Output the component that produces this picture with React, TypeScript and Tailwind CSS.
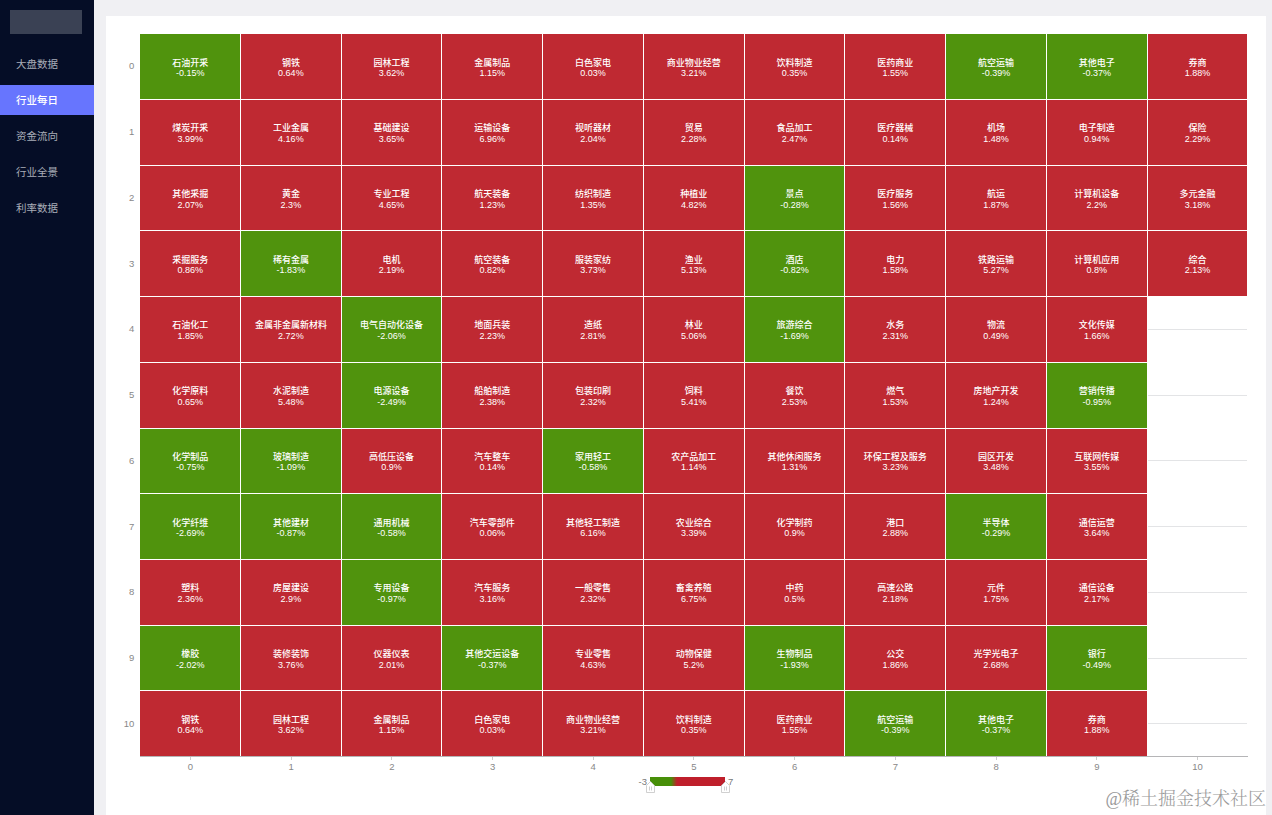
import clsx from 'clsx';

const MENU = ['大盘数据', '行业每日', '资金流向', '行业全景', '利率数据'];
const ACTIVE_MENU = '行业每日';

// one entry per chart row, [name, value] pairs from left to right
const ROWS: [string, number][][] = [
  [['石油开采', -0.15], ['钢铁', 0.64], ['园林工程', 3.62], ['金属制品', 1.15], ['白色家电', 0.03], ['商业物业经营', 3.21], ['饮料制造', 0.35], ['医药商业', 1.55], ['航空运输', -0.39], ['其他电子', -0.37], ['券商', 1.88]],
  [['煤炭开采', 3.99], ['工业金属', 4.16], ['基础建设', 3.65], ['运输设备', 6.96], ['视听器材', 2.04], ['贸易', 2.28], ['食品加工', 2.47], ['医疗器械', 0.14], ['机场', 1.48], ['电子制造', 0.94], ['保险', 2.29]],
  [['其他采掘', 2.07], ['黄金', 2.3], ['专业工程', 4.65], ['航天装备', 1.23], ['纺织制造', 1.35], ['种植业', 4.82], ['景点', -0.28], ['医疗服务', 1.56], ['航运', 1.87], ['计算机设备', 2.2], ['多元金融', 3.18]],
  [['采掘服务', 0.86], ['稀有金属', -1.83], ['电机', 2.19], ['航空装备', 0.82], ['服装家纺', 3.73], ['渔业', 5.13], ['酒店', -0.82], ['电力', 1.58], ['铁路运输', 5.27], ['计算机应用', 0.8], ['综合', 2.13]],
  [['石油化工', 1.85], ['金属非金属新材料', 2.72], ['电气自动化设备', -2.06], ['地面兵装', 2.23], ['造纸', 2.81], ['林业', 5.06], ['旅游综合', -1.69], ['水务', 2.31], ['物流', 0.49], ['文化传媒', 1.66]],
  [['化学原料', 0.65], ['水泥制造', 5.48], ['电源设备', -2.49], ['船舶制造', 2.38], ['包装印刷', 2.32], ['饲料', 5.41], ['餐饮', 2.53], ['燃气', 1.53], ['房地产开发', 1.24], ['营销传播', -0.95]],
  [['化学制品', -0.75], ['玻璃制造', -1.09], ['高低压设备', 0.9], ['汽车整车', 0.14], ['家用轻工', -0.58], ['农产品加工', 1.14], ['其他休闲服务', 1.31], ['环保工程及服务', 3.23], ['园区开发', 3.48], ['互联网传媒', 3.55]],
  [['化学纤维', -2.69], ['其他建材', -0.87], ['通用机械', -0.58], ['汽车零部件', 0.06], ['其他轻工制造', 6.16], ['农业综合', 3.39], ['化学制药', 0.9], ['港口', 2.88], ['半导体', -0.29], ['通信运营', 3.64]],
  [['塑料', 2.36], ['房屋建设', 2.9], ['专用设备', -0.97], ['汽车服务', 3.16], ['一般零售', 2.32], ['畜禽养殖', 6.75], ['中药', 0.5], ['高速公路', 2.18], ['元件', 1.75], ['通信设备', 2.17]],
  [['橡胶', -2.02], ['装修装饰', 3.76], ['仪器仪表', 2.01], ['其他交运设备', -0.37], ['专业零售', 4.63], ['动物保健', 5.2], ['生物制品', -1.93], ['公交', 1.86], ['光学光电子', 2.68], ['银行', -0.49]],
  [['钢铁', 0.64], ['园林工程', 3.62], ['金属制品', 1.15], ['白色家电', 0.03], ['商业物业经营', 3.21], ['饮料制造', 0.35], ['医药商业', 1.55], ['航空运输', -0.39], ['其他电子', -0.37], ['券商', 1.88]],
];

function Sidebar() {
  return (
    <aside className="w-[94px] shrink-0 bg-[#050d26] pt-[10px]">
      <div className="ml-[10px] h-6 w-[72px] bg-[#3a4154]" />
      <nav className="mt-[15px] flex flex-col gap-[6px]">
        {MENU.map((item) => (
          <a
            key={item}
            className={clsx(
              'flex h-[30px] items-center pt-[2px] pl-4 text-[10.5px]',
              item === ACTIVE_MENU ? 'bg-[#6775fe] font-medium text-white' : 'text-[#a9adb8]',
            )}
          >
            {item}
          </a>
        ))}
      </nav>
    </aside>
  );
}

function Cell({ name, value }: { name: string; value: number }) {
  return (
    <div
      className={clsx(
        'flex flex-col items-center justify-center pt-[3px] text-[9px] leading-[10.5px] font-medium whitespace-nowrap text-white',
        value < 0 ? 'bg-[#50930d]' : 'bg-[#bf2932]',
      )}
    >
      <span>{name}</span>
      <span>{value}%</span>
    </div>
  );
}

function EmptyCell() {
  return (
    <div className="flex items-center">
      <div className="h-px w-full bg-[#e3e4e6]" />
    </div>
  );
}

function Handle() {
  return (
    <svg width="9" height="12" viewBox="0 0 9 12" fill="none">
      <path d="M4.5 0.5 L8.5 4.5 V11.5 H0.5 V4.5 Z" fill="#fff" stroke="#c4c4c4" strokeWidth="0.8" />
      <path d="M3.5 5.5 V9.5 M5.5 5.5 V9.5" stroke="#bbb" strokeWidth="0.7" />
    </svg>
  );
}

function VisualMap() {
  return (
    <div className="mt-[4px] ml-[531px] flex h-[20px] items-start text-[9.5px] leading-[10px] text-[#777]">
      <span className="w-[10px] text-right">-3</span>
      <div className="relative ml-[3px] h-[9px] w-[75px]">
        <svg className="block" width="75" height="9" viewBox="0 0 75 9">
          <defs>
            <linearGradient id="range">
              <stop offset="0" stopColor="#478f08" />
              <stop offset="0.28" stopColor="#478f08" />
              <stop offset="0.36" stopColor="#bf1f2b" />
              <stop offset="1" stopColor="#bf1f2b" />
            </linearGradient>
          </defs>
          <path d="M0 0 H75 V9 H0 Z" fill="url(#range)" />
        </svg>
        <div className="absolute top-[4px] -left-[4px]">
          <Handle />
        </div>
        <div className="absolute top-[4px] -right-[5px]">
          <Handle />
        </div>
      </div>
      <span className="ml-[3px]">7</span>
    </div>
  );
}

function HeatMap() {
  return (
    <div className="pt-[18.2px]">
      <div className="flex h-[722px]">
        <div className="grid w-[34.3px] grid-rows-11 gap-px pr-[6px] text-right text-[9.5px] text-[#888]">
          {ROWS.map((_, i) => (
            <span key={i} className="flex items-center justify-end">{i}</span>
          ))}
        </div>
        <div className="grid w-[1107px] grid-cols-11 grid-rows-11 gap-px bg-white">
          {ROWS.map((row, i) =>
            Array.from({ length: 11 }, (_, j) =>
              row[j] ? (
                <Cell key={`${i}-${j}`} name={row[j][0]} value={row[j][1]} />
              ) : (
                <EmptyCell key={`${i}-${j}`} />
              ),
            ),
          )}
        </div>
      </div>
      <div className="ml-[34px] grid h-[17px] w-[1108px] grid-cols-11 border-t border-[#b5b5b7] text-[9.5px] leading-[13px] text-[#888]">
        {ROWS.map((_, i) => (
          <div key={i} className="flex flex-col items-center">
            <div className="h-[3px] w-px bg-[#ccc]" />
            <span>{i}</span>
          </div>
        ))}
      </div>
      <VisualMap />
    </div>
  );
}

export default function App() {
  return (
    <div className="relative flex h-[815px] w-[1272px] overflow-hidden bg-[#f0f0f3] font-['Liberation_Sans','Noto_Sans_CJK_SC',sans-serif]">
      <Sidebar />
      <main className="flex-1 pt-4 pr-[6px] pl-3">
        <div className="h-full bg-white">
          <HeatMap />
        </div>
      </main>
      <div className="absolute right-[6px] bottom-[4px] font-['Liberation_Serif','Noto_Serif_CJK_SC','Noto_Sans_CJK_SC',serif] text-[18px] leading-6 font-light whitespace-nowrap text-[#999]">
        @稀土掘金技术社区
      </div>
    </div>
  );
}
